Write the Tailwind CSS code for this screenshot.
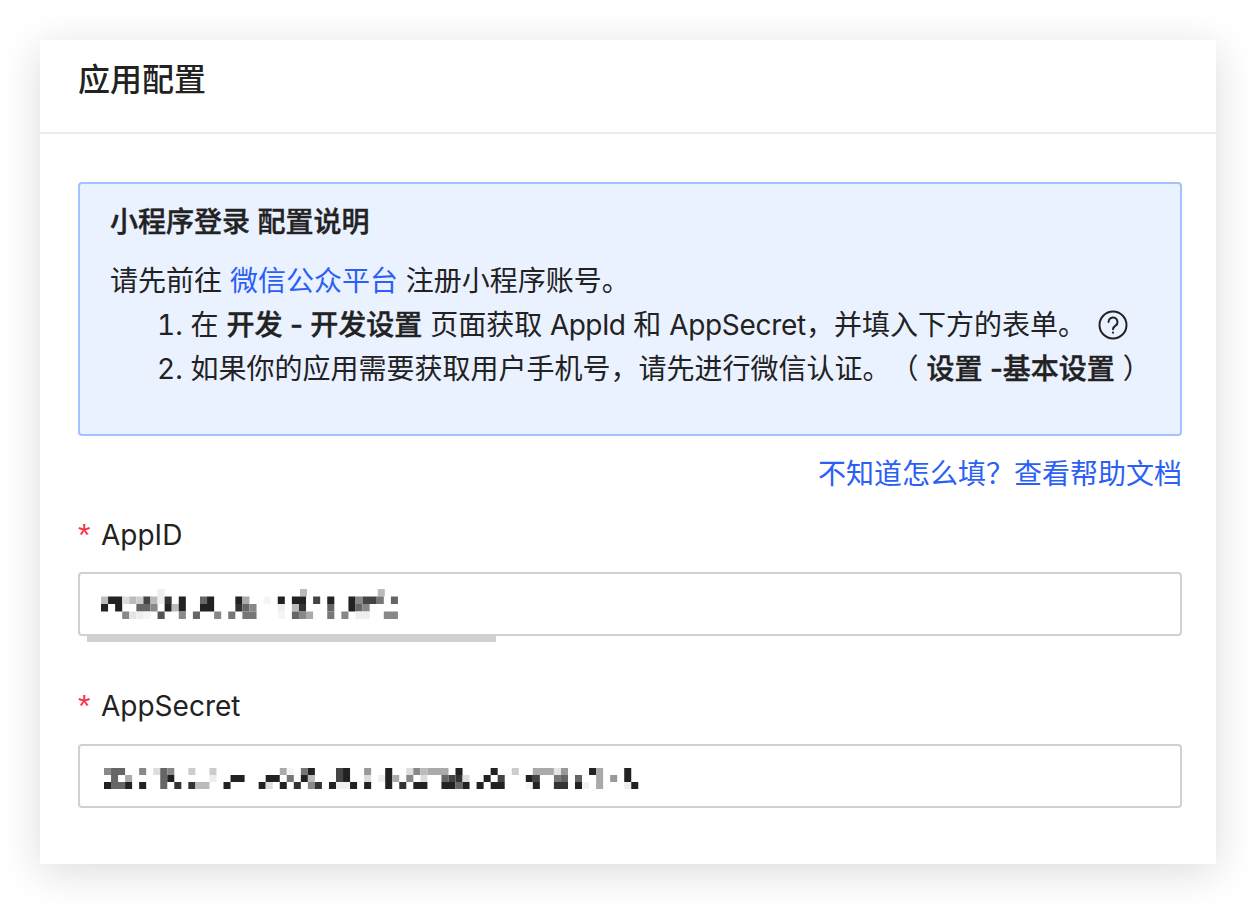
<!DOCTYPE html>
<html lang="zh-CN">
<head>
    <meta charset="UTF-8">
    <meta name="viewport" content="width=device-width, initial-scale=1.0">
    <title>应用配置</title>
    <script src="https://cdn.jsdelivr.net/npm/@tailwindcss/browser@4"></script>
</head>
<body class="bg-white font-[Inter,'Noto_Sans_CJK_SC',sans-serif] text-[28px] leading-[44px] text-[#222] [text-spacing-trim:space-all]">

    <div class="p-10">
        <div class="bg-white shadow-[0_8px_40px_rgba(0,0,0,0.14)]">
            <!-- Header -->
            <div class="h-[94px] border-b-2 border-[#ebebeb] pl-[38px] pt-[18px]">
                <h1 class="text-[32px] leading-[44px] font-medium">应用配置</h1>
            </div>

            <div class="pl-[38px] pr-[34px] pt-[48px] pb-[56px]">
                <!-- Notice -->
                <div class="h-[254px] rounded-[4px] border-2 border-[#a3c0ff] bg-[#eaf1ff] px-[30px] pt-[16px]">
                    <p class="font-medium [-webkit-text-stroke:0.4px_#222]">小程序登录 配置说明</p>
                    <p class="mt-[15px]">请先前往 <a class="text-[#2b5ff5]">微信公众平台</a> 注册小程序账号。</p>
                    <ol class="pl-[47px] whitespace-nowrap">
                        <li class="flex items-center">
                            <span><span class="tabular-nums">1.</span> 在 <b class="font-medium [-webkit-text-stroke:0.4px_#222]">开发 - 开发设置</b> 页面获取 <span class="tracking-[-0.6px]">AppId</span> 和 <span class="tracking-[-0.3px]">AppSecret</span>，并填入下方的表单。</span>
                            <svg class="ml-[12px] h-[30px] w-[30px]" viewBox="0 0 30 30" fill="none" stroke="#222" stroke-width="2" stroke-linecap="round">
                                <circle cx="15" cy="15" r="13.5"/>
                                <path d="M10.5 12a4.5 4.5 0 1 1 7 3.7c-1.6 1.1-2.5 1.9-2.5 3.6"/>
                                <path d="M15 22.6v.2"/>
                            </svg>
                        </li>
                        <li><span class="tabular-nums">2.</span> 如果你的应用需要获取用户手机号，请先进行微信认证。（ <b class="font-medium [-webkit-text-stroke:0.4px_#222]">设置 -基本设置</b> ）</li>
                    </ol>
                </div>

                <div class="mt-[16px] text-right">
                    <a class="text-[#2b5ff5]">不知道怎么填？查看帮助文档</a>
                </div>

                <!-- AppID -->
                <label class="mt-[17px] flex"><span class="w-[23px] font-['Liberation_Sans'] text-[32px] text-[#f8334a]">*</span>AppID</label>
                <div class="relative mt-[15px] flex h-[64px] items-center rounded-[4px] border-2 border-[#d0d0d0] pl-[21px]">
                    <svg id="appIdMask" class="h-[30px] w-[300px] blur-[0.6px]" viewBox="0 0 300 30"></svg>
                    <div class="absolute left-[7px] top-[61px] h-[7px] w-[409px] bg-[#d0d0d0]"></div>
                </div>

                <!-- AppSecret -->
                <label class="mt-[48px] flex"><span class="w-[23px] font-['Liberation_Sans'] text-[32px] text-[#f8334a]">*</span>AppSecret</label>
                <div class="mt-[16px] flex h-[64px] items-center rounded-[4px] border-2 border-[#d0d0d0] pl-[24px]">
                    <svg id="secretMask" class="mt-[5px] h-[21px] w-[540px] blur-[0.6px]" viewBox="0 0 540 21"></svg>
                </div>
            </div>
        </div>
    </div>

    <script>
        // AppID mosaic cells: [x, row, width, colour], x in px from the left of the mask
        const appIdCells = [
            [56,0,7,'#eee'],[197,0,7,'#bbb'],[274,0,7,'#bbb'],
            [0,1,7,'#bbb'],[7,1,14,'#222'],[21,1,7,'#ddd'],[28,1,7,'#bbb'],[35,1,7,'#ccc'],[42,1,7,'#444'],[49,1,7,'#bbb'],[56,1,7,'#eee'],[63,1,7,'#333'],[77,1,7,'#222'],[98,1,7,'#666'],[105,1,7,'#222'],[133,1,7,'#222'],[140,1,7,'#aaa'],[161,1,7,'#f5f5f5'],[175,1,7,'#222'],[189,1,14,'#222'],[210,1,7,'#444'],[224,1,7,'#222'],[245,1,7,'#222'],[252,1,7,'#888'],[259,1,14,'#444'],[273,1,7,'#777'],[287,1,7,'#666'],
            [0,2,7,'#222'],[14,2,7,'#222'],[35,2,14,'#666'],[49,2,7,'#888'],[63,2,7,'#222'],[70,2,7,'#bbb'],[77,2,7,'#222'],[98,2,14,'#222'],[133,2,7,'#333'],[140,2,7,'#666'],[147,2,7,'#888'],[175,2,7,'#eee'],[189,2,7,'#bbb'],[196,2,7,'#333'],[224,2,7,'#666'],[245,2,7,'#222'],[252,2,7,'#666'],[259,2,7,'#888'],
            [21,3,7,'#888'],[28,3,7,'#e5e5e5'],[35,3,7,'#eee'],[42,3,7,'#f5f5f5'],[56,3,7,'#555'],[77,3,7,'#888'],[91,3,7,'#666'],[112,3,7,'#888'],[126,3,7,'#777'],[140,3,14,'#777'],[175,3,7,'#f5f5f5'],[189,3,7,'#666'],[196,3,7,'#888'],[203,3,7,'#aaa'],[224,3,7,'#777'],[238,3,7,'#888'],[252,3,14,'#eee'],[280,3,14,'#888']
        ];

        // AppSecret mosaic cells: [column, row, columns wide, colour]
        const secretCells = [
            [0,0,1,'#888'],[1,0,2,'#666'],[5,0,1,'#888'],[7,0,1,'#ddd'],[8,0,1,'#666'],[9,0,1,'#888'],[12,0,1,'#ccc'],[15,0,1,'#ccc'],[25,0,1,'#aaa'],[26,0,1,'#f5f5f5'],[28,0,1,'#777'],[29,0,1,'#222'],[33,0,1,'#444'],[34,0,1,'#222'],[37,0,1,'#999'],
            [40,0,1,'#222'],[43,0,1,'#ddd'],[44,0,1,'#888'],[45,0,1,'#bbb'],[46,0,3,'#aaa'],[50,0,1,'#222'],[55,0,1,'#222'],[58,0,1,'#ccc'],[61,0,3,'#aaa'],[64,0,1,'#e5e5e5'],[65,0,1,'#999'],[69,0,1,'#222'],[70,0,1,'#aaa'],[74,0,1,'#222'],
            [1,1,1,'#666'],[3,1,1,'#aaa'],[8,1,1,'#666'],[9,1,1,'#222'],[15,1,1,'#eee'],[18,1,2,'#222'],[23,1,2,'#222'],[26,1,1,'#777'],[28,1,1,'#222'],[29,1,1,'#bbb'],[33,1,1,'#444'],[34,1,1,'#222'],[37,1,1,'#ddd'],
            [39,1,1,'#eee'],[40,1,1,'#222'],[41,1,1,'#aaa'],[43,1,1,'#888'],[45,1,1,'#ddd'],[48,1,1,'#666'],[49,1,1,'#444'],[50,1,1,'#333'],[51,1,1,'#ddd'],[54,1,1,'#222'],[56,1,1,'#444'],[60,1,1,'#222'],[61,1,1,'#444'],[64,1,1,'#777'],[65,1,1,'#666'],[67,1,1,'#666'],[70,1,1,'#aaa'],[72,1,1,'#999'],[74,1,1,'#222'],
            [0,2,1,'#222'],[1,2,2,'#666'],[3,2,1,'#222'],[5,2,1,'#222'],[8,2,1,'#666'],[10,2,1,'#333'],[12,2,1,'#333'],[13,2,2,'#bbb'],[17,2,1,'#222'],[22,2,1,'#222'],[23,2,1,'#ddd'],[25,2,1,'#222'],[27,2,1,'#333'],[29,2,1,'#888'],[30,2,1,'#333'],[32,2,1,'#222'],[33,2,2,'#f0f0f0'],[35,2,1,'#222'],[37,2,1,'#222'],
            [40,2,1,'#222'],[42,2,1,'#333'],[44,2,2,'#222'],[48,2,2,'#222'],[50,2,1,'#666'],[51,2,1,'#222'],[53,2,1,'#222'],[55,2,2,'#222'],[60,2,1,'#f5f5f5'],[61,2,1,'#222'],[64,2,2,'#333'],[67,2,1,'#222'],[68,2,1,'#f0f0f0'],[70,2,1,'#aaa'],[74,2,1,'#eee'],[75,2,1,'#222']
        ];

        function drawMask(id, cells, cellWidth, rowHeight) {
            const svg = document.getElementById(id);
            svg.innerHTML = cells.map(([x, row, w, fill]) =>
                `<rect x="${x * cellWidth}" y="${row * rowHeight}" width="${w * cellWidth}" height="${rowHeight}" fill="${fill}"/>`
            ).join('');
        }

        drawMask('appIdMask', appIdCells, 1.01, 7.5);
        drawMask('secretMask', secretCells, 7.03, 7);
    </script>
</body>
</html>
